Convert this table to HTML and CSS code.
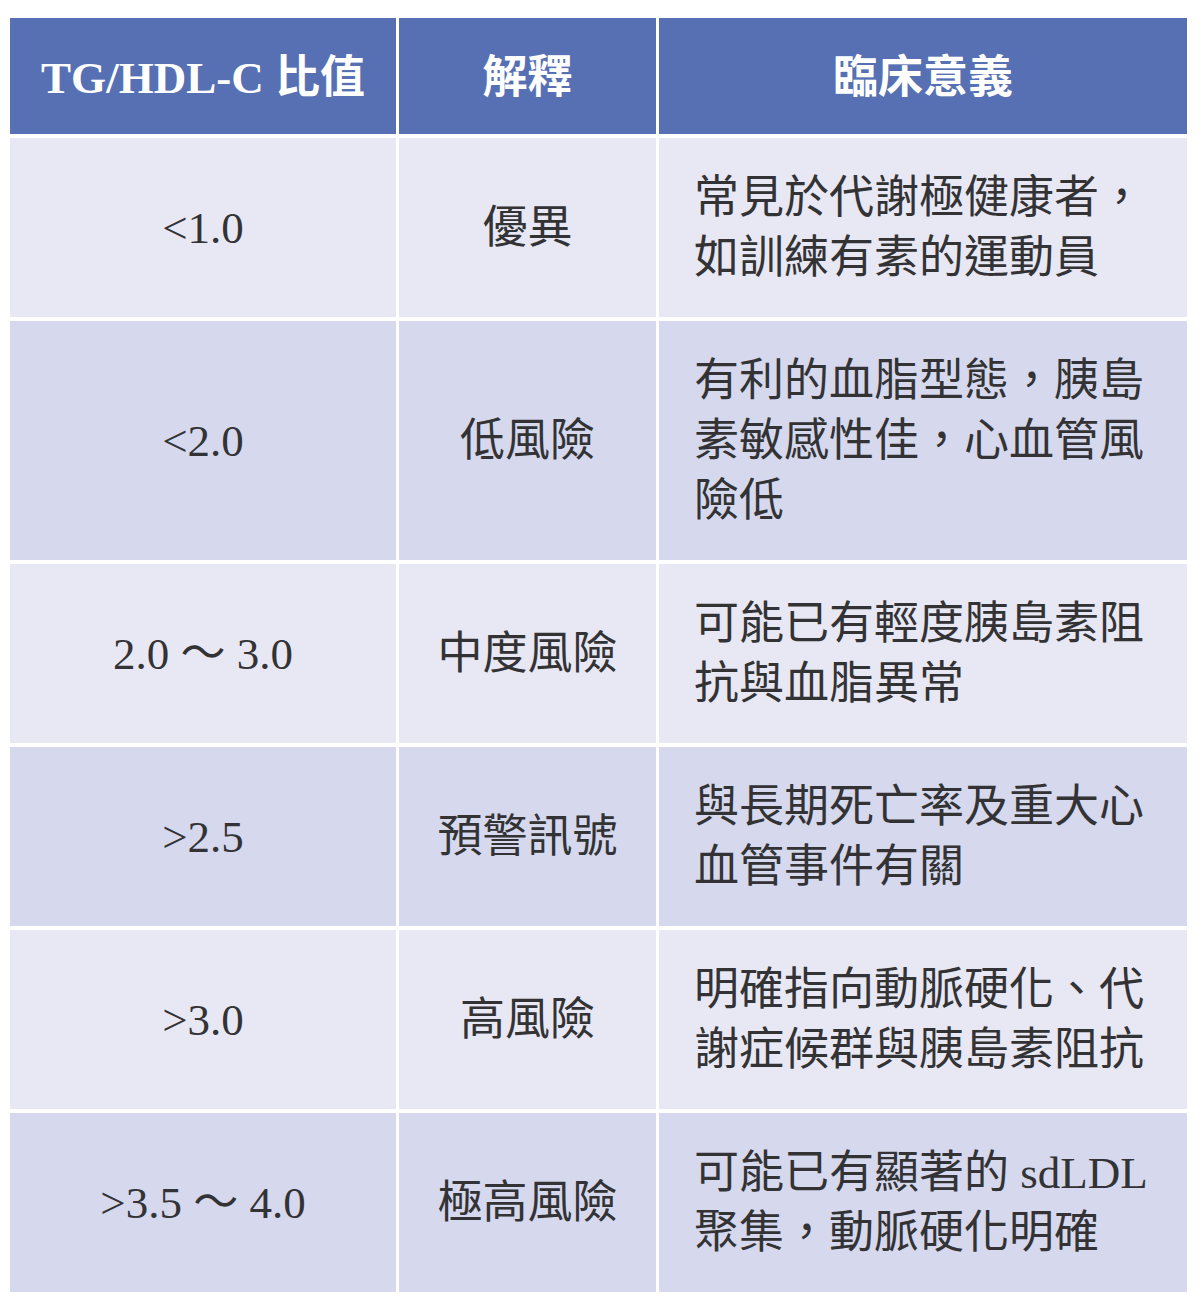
FILE: index.html
```html
<!DOCTYPE html>
<html lang="zh-Hant">
<head>
<meta charset="utf-8">
<title>TG/HDL-C 比值</title>
<link rel="stylesheet" href="styles.css">
</head>
<body>
<div class="table">
  <div class="cell head">TG/HDL-C 比值</div>
  <div class="cell head">解釋</div>
  <div class="cell head">臨床意義</div>

  <div class="cell odd num">&lt;1.0</div>
  <div class="cell odd mid">優異</div>
  <div class="cell odd desc">常見於代謝極健康者，如訓練有素的運動員</div>

  <div class="cell even num">&lt;2.0</div>
  <div class="cell even mid">低風險</div>
  <div class="cell even desc">有利的血脂型態，胰島素敏感性佳，心血管風險低</div>

  <div class="cell odd num">2.0 ～ 3.0</div>
  <div class="cell odd mid">中度風險</div>
  <div class="cell odd desc">可能已有輕度胰島素阻抗與血脂異常</div>

  <div class="cell even num">&gt;2.5</div>
  <div class="cell even mid">預警訊號</div>
  <div class="cell even desc">與長期死亡率及重大心血管事件有關</div>

  <div class="cell odd num">&gt;3.0</div>
  <div class="cell odd mid">高風險</div>
  <div class="cell odd desc">明確指向動脈硬化、代謝症候群與胰島素阻抗</div>

  <div class="cell even num">&gt;3.5 ～ 4.0</div>
  <div class="cell even mid">極高風險</div>
  <div class="cell even desc">可能已有顯著的 sdLDL 聚集，動脈硬化明確</div>
</div>
</body>
</html>
```

FILE: styles.css
```css
html, body {
  margin: 0;
  padding: 0;
  background: #ffffff;
}

body {
  padding: 18px 10px 12px 10px;
  font-family: "Liberation Serif", "Noto Sans CJK TC", serif;
  color: #333335;
}

.table {
  display: grid;
  grid-template-columns: 386px 257px 528px;
  column-gap: 3px;
  row-gap: 4px;
}

.cell {
  font-size: 45px;
  line-height: 60px;
  padding: 29.5px 0;
  display: flex;
  align-items: center;
  justify-content: center;
  text-align: center;
}

.head {
  background: #5670b3;
  color: #ffffff;
  font-weight: bold;
  height: 116px;
  padding: 4px 0 0 0;
  box-sizing: border-box;
}

.odd {
  background: #e8e8f4;
}

.even {
  background: #d6d9ee;
}

.desc {
  justify-content: flex-start;
  text-align: left;
  padding-left: 35px;
  padding-right: 30px;
}
```
